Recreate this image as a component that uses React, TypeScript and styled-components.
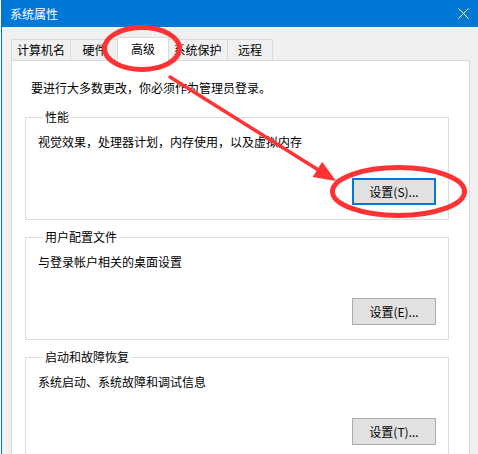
import React from "react";
import styled, { createGlobalStyle } from "styled-components";

const GlobalStyle = createGlobalStyle`
  html, body { margin: 0; padding: 0; background: #ffffff; }
  body {
    font-family: "Noto Sans CJK SC", "Microsoft YaHei", sans-serif;
    font-size: 12px;
    color: #000;
  }
  * { box-sizing: border-box; }
`;

const Stage = styled.div`
  position: relative;
  width: 478px;
  height: 454px;
  overflow: hidden;
`;

const Window = styled.div`
  margin-left: 1px;
  width: 477px;
  height: 454px;
  border-left: 1px solid #0078d7;
  background: #f0f0f0;
  display: flex;
  flex-direction: column;
`;

const TitleBar = styled.div`
  height: 27px;
  flex: none;
  background: #0078d7;
  color: #ffffff;
  display: flex;
  align-items: center;
  justify-content: space-between;
  padding: 0 9px 0 8px;
`;

const Title = styled.span`
  font-size: 12px;
  line-height: 16px;
`;

const Body = styled.div`
  flex: 1;
  display: flex;
  flex-direction: column;
  padding: 10px 0 0 9px;
  min-height: 0;
`;

const TabRow = styled.div`
  display: flex;
  align-items: flex-end;
  height: 24px;
  flex: none;
`;

const Tab = styled.div<{ $w: number; $active?: boolean; $ml: number }>`
  width: ${(p) => p.$w}px;
  margin-left: ${(p) => p.$ml}px;
  margin-right: ${(p) => (p.$active ? -2 : 0)}px;
  margin-bottom: ${(p) => (p.$active ? -1 : 0)}px;
  height: ${(p) => (p.$active ? 25 : 22)}px;
  padding-bottom: ${(p) => (p.$active ? 3 : 0)}px;
  border: 1px solid #d9d9d9;
  border-bottom: ${(p) => (p.$active ? "none" : "1px solid #d9d9d9")};
  background: ${(p) => (p.$active ? "#ffffff" : "#f0f0f0")};
  position: relative;
  z-index: ${(p) => (p.$active ? 2 : 0)};
  display: flex;
  align-items: center;
  justify-content: center;
  font-size: 12px;
  line-height: 16px;
  white-space: nowrap;
`;

const Panel = styled.div`
  flex: 1;
  width: 459px;
  background: #ffffff;
  border: 1px solid #d9d9d9;
  padding: 19px 0 0 0;
  position: relative;
  z-index: 1;
  margin-top: -1px;
`;

const Intro = styled.p`
  margin: 0 0 13px 19px;
  font-size: 12px;
  line-height: 16px;
`;

const Group = styled.fieldset`
  margin: 0 0 9px 13px;
  width: 424px;
  border: 1px solid #dcdcdc;
  padding: 0 12px 14px 12px;
  min-inline-size: 0;
`;

const Legend = styled.legend`
  margin-left: 5px;
  padding: 0 2px;
  font-size: 12px;
  line-height: 16px;
`;

const GroupText = styled.div`
  padding-top: 9px;
  font-size: 12px;
  line-height: 16px;
`;

const ButtonRow = styled.div`
  display: flex;
  justify-content: flex-end;
  margin-top: 28px;
`;

const Button = styled.button<{ $default?: boolean }>`
  width: 84px;
  height: 27px;
  padding: 0;
  background: #e1e1e1;
  border: ${(p) => (p.$default ? "2px solid #0078d7" : "1px solid #adadad")};
  font-family: inherit;
  font-size: 12px;
  line-height: 16px;
  color: #000;
`;

const Overlay = styled.svg`
  position: absolute;
  left: 0;
  top: 0;
  z-index: 10;
  pointer-events: none;
`;

const tabs = [
  { label: "计算机名", w: 60, ml: 0 },
  { label: "硬件", w: 49, ml: -1 },
  { label: "高级", w: 52, ml: -2, active: true },
  { label: "系统保护", w: 61, ml: 0 },
  { label: "远程", w: 46, ml: -1 },
];

const groups = [
  { legend: "性能", text: "视觉效果，处理器计划，内存使用，以及虚拟内存", btn: "设置(S)...", def: true },
  { legend: "用户配置文件", text: "与登录帐户相关的桌面设置", btn: "设置(E)...", def: false },
  { legend: "启动和故障恢复", text: "系统启动、系统故障和调试信息", btn: "设置(T)...", def: false },
];

export default function App() {
  return (
    <Stage>
      <GlobalStyle />
      <Window>
        <TitleBar>
          <Title>系统属性</Title>
          <svg width="11" height="11" viewBox="0 0 11 11">
            <path d="M0.5 0.5 L10.5 10.5 M10.5 0.5 L0.5 10.5" stroke="#ffffff" strokeWidth="1" fill="none" />
          </svg>
        </TitleBar>
        <Body>
          <TabRow>
            {tabs.map((t) => (
              <Tab key={t.label} $w={t.w} $ml={t.ml} $active={t.active}>
                {t.label}
              </Tab>
            ))}
          </TabRow>
          <Panel>
            <Intro>要进行大多数更改，你必须作为管理员登录。</Intro>
            {groups.map((g) => (
              <Group key={g.legend}>
                <Legend>{g.legend}</Legend>
                <GroupText>{g.text}</GroupText>
                <ButtonRow>
                  <Button $default={g.def}>{g.btn}</Button>
                </ButtonRow>
              </Group>
            ))}
          </Panel>
        </Body>
      </Window>
      <Overlay width="478" height="454" viewBox="0 0 478 454">
        <ellipse cx="142" cy="48.5" rx="37.5" ry="21" fill="none" stroke="#ff3333" strokeWidth="5" />
        <ellipse cx="398.5" cy="191.5" rx="66" ry="24" fill="none" stroke="#ff3333" strokeWidth="5" />
        <line x1="170" y1="77" x2="320" y2="171" stroke="#ff3333" strokeWidth="3.5" strokeLinecap="round" />
        <polygon points="336,181 312.6,176.9 322.2,161.7" fill="#ff3333" />
      </Overlay>
    </Stage>
  );
}
